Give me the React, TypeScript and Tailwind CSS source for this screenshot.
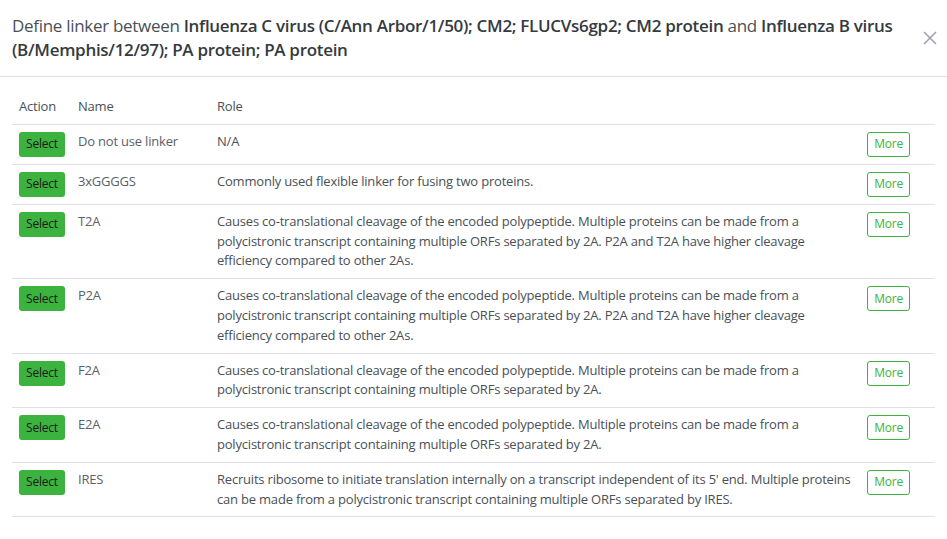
import React from 'react'

const rows = [
  { name: 'Do not use linker', role: 'N/A' },
  { name: '3xGGGGS', role: 'Commonly used flexible linker for fusing two proteins.' },
  {
    name: 'T2A',
    role: 'Causes co-translational cleavage of the encoded polypeptide. Multiple proteins can be made from a polycistronic transcript containing multiple ORFs separated by 2A. P2A and T2A have higher cleavage efficiency compared to other 2As.',
  },
  {
    name: 'P2A',
    role: 'Causes co-translational cleavage of the encoded polypeptide. Multiple proteins can be made from a polycistronic transcript containing multiple ORFs separated by 2A. P2A and T2A have higher cleavage efficiency compared to other 2As.',
  },
  {
    name: 'F2A',
    role: 'Causes co-translational cleavage of the encoded polypeptide. Multiple proteins can be made from a polycistronic transcript containing multiple ORFs separated by 2A.',
  },
  {
    name: 'E2A',
    role: 'Causes co-translational cleavage of the encoded polypeptide. Multiple proteins can be made from a polycistronic transcript containing multiple ORFs separated by 2A.',
  },
  {
    name: 'IRES',
    role: "Recruits ribosome to initiate translation internally on a transcript independent of its 5' end. Multiple proteins can be made from a polycistronic transcript containing multiple ORFs separated by IRES.",
  },
]

export default function App() {
  return (
    <div className="w-[947px] h-[539px] bg-white overflow-hidden" style={{ fontFamily: '"Open Sans", sans-serif' }}>
      {/* Header */}
      <div className="flex items-start justify-between border-b border-[#dee2e6] pl-3 pr-2 pt-[14px] pb-[14px]">
        <h5 className="text-[17px] leading-6 text-[#495057] tracking-[-0.3px] pr-3">
          Define linker between <b className="font-semibold text-[#343a40]">Influenza C virus (C/Ann Arbor/1/50); CM2; FLUCVs6gp2; CM2 protein</b> and{' '}
          <b className="font-semibold text-[#343a40]">Influenza B virus (B/Memphis/12/97); PA protein; PA protein</b>
        </h5>
        <button className="mt-[17px] mr-[2px] text-[#9ca3af] shrink-0">
          <svg width="14" height="14" viewBox="0 0 14 14" stroke="currentColor" strokeWidth="1.6" fill="none">
            <path d="M1 1L13 13M13 1L1 13" />
          </svg>
        </button>
      </div>

      {/* Table */}
      <div className="px-3 pt-[17px]">
        <table className="w-full border-collapse text-[13px] leading-[19.8px] text-[#495057] tracking-[-0.2px]">
          <thead>
            <tr className="border-b border-[#dee2e6]">
              <th className="text-left font-normal px-[7px] pt-[3px] pb-[7px] w-[60px]">Action</th>
              <th className="text-left font-normal px-[6px] pt-[3px] pb-[7px] w-[138px]">Name</th>
              <th className="text-left font-normal px-[7px] pt-[3px] pb-[7px]">Role</th>
              <th className="w-[75px]"></th>
            </tr>
          </thead>
          <tbody>
            {rows.map((r) => (
              <tr key={r.name} className="border-b border-[#dee2e6] align-top">
                <td className="px-[7px] py-[7px]">
                  <button className="h-[25px] px-[7px] rounded-[3px] bg-[#3bb33e] text-[12px] text-[#1a1a1a]">Select</button>
                </td>
                <td className="px-[6px] py-[7px] text-[#5a6169]">{r.name}</td>
                <td className="px-[7px] py-[7px] pr-2">{r.role}</td>
                <td className="py-[7px] pr-[25px] text-right">
                  <button className="h-[25px] px-[6px] rounded-[3px] border border-[#3bb33e] bg-white text-[12px] text-[#3bb33e]">More</button>
                </td>
              </tr>
            ))}
          </tbody>
        </table>
      </div>
    </div>
  )
}
